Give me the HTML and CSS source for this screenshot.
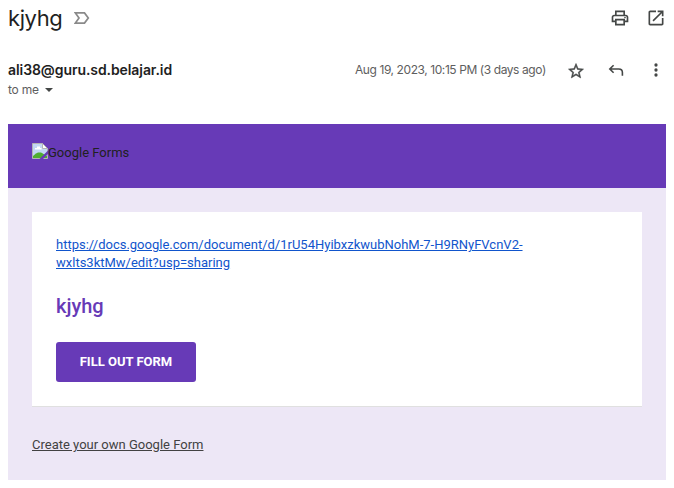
FILE: index.html
```html
<!DOCTYPE html>
<html lang="en">
<head>
<meta charset="utf-8">
<title>kjyhg</title>
<link rel="stylesheet" href="styles.css">
</head>
<body>
<header class="subject-bar">
  <h1 class="subject">kjyhg</h1>
  <svg class="tag" width="16" height="12" viewBox="0 0 16 12"><path d="M1.4.9h9.1L14.3 6l-3.8 5.1H1.4L5 6z"/></svg>
  <div class="subject-tools">
    <svg class="icon" viewBox="0 0 24 24"><path d="M19 8h-1V3H6v5H5c-1.66 0-3 1.34-3 3v6h4v4h12v-4h4v-6c0-1.66-1.34-3-3-3zM8 5h8v3H8V5zm8 12v2H8v-4h8v2zm2-2v-2H6v2H4v-4c0-.55.45-1 1-1h14c.55 0 1 .45 1 1v4h-2z"/><circle cx="18" cy="11.5" r="1"/></svg>
    <svg class="icon" viewBox="0 0 24 24"><path d="M19 19H5V5h7V3H5c-1.11 0-2 .9-2 2v14c0 1.1.89 2 2 2h14c1.1 0 2-.9 2-2v-7h-2v7zM14 3v2h3.59l-9.83 9.83 1.41 1.41L19 6.41V10h2V3h-7z"/></svg>
  </div>
</header>
<section class="sender-row">
  <div class="sender">
    <div class="address">ali38@guru.sd.belajar.id</div>
    <div class="recipient"><span class="to">to me</span><span class="caret"></span></div>
  </div>
  <div class="meta">
    <span class="date">Aug 19, 2023, 10:15 PM (3 days ago)</span>
    <svg class="icon star" viewBox="0 0 24 24"><path d="M21 9.74l-6.5-.6L12 3 9.5 9.14l-6.5.6 4.9 4.23L6.4 20.3 12 16.9l5.6 3.4-1.5-6.33L21 9.74zM12 15.4l-3.76 2.27 1-4.28-3.32-2.88 4.38-.38L12 6.1l1.71 4.04 4.38.38-3.32 2.88 1 4.28L12 15.4z" stroke="#444746" stroke-width=".7"/></svg>
    <svg class="icon" viewBox="0 0 20 20"><path class="stroke" d="M7.6 5.2 3.8 9l3.8 3.8M4 9h8.8q3.6 0 3.6 3.6v3.1"/></svg>
    <svg class="icon" viewBox="0 0 20 20"><circle cx="10" cy="5" r="1.65"/><circle cx="10" cy="10" r="1.65"/><circle cx="10" cy="15" r="1.65"/></svg>
  </div>
</section>
<main class="mail">
  <div class="banner">
    <svg class="broken" width="16" height="16" viewBox="0 0 16 16">
      <path fill="#c3d7f4" d="M.5.5h10l5 5v10H.5z"/>
      <path fill="#fff" d="M3 6.5V5h2V3.5h3V5h1.5v1.5z"/>
      <path fill="#4fae31" d="M1 15v-2l3-2.5 2-1h3l3 1.7 3 1.8v2z"/>
      <path fill="#fff" d="M10.5.5v5h5z"/>
      <path fill="none" stroke="#b4b4b4" d="M.5 15.5V.5h10l5 5v10H.5M10.5.5v5h5"/>
      <path fill="#673ab7" d="M16 7.5V11l-5 5H7.5z"/>
    </svg><span>Google Forms</span>
  </div>
  <div class="content">
    <div class="card">
      <a class="doc-link">https://docs.google.com/document/d/1rU54HyibxzkwubNohM-7-H9RNyFVcnV2-<br>wxlts3ktMw/edit?usp=sharing</a>
      <h2 class="form-title">kjyhg</h2>
      <a class="button">FILL OUT FORM</a>
    </div>
    <a class="create">Create your own Google Form</a>
  </div>
</main>
</body>
</html>
```
FILE: styles.css
```css
* { box-sizing: border-box; }
body { margin: 0; width: 674px; height: 488px; padding: 0 8px; background: #fff; font: 13px/18px Roboto, sans-serif; color: #222; overflow: hidden; }
svg { display: block; flex: none; }
.icon { width: 20px; height: 20px; fill: #444746; }
.star { margin-top: 1px; }
.stroke { fill: none; stroke: #444746; stroke-width: 1.6; }
.subject-bar { display: flex; align-items: center; height: 36px; }
.subject { width: 54px; margin: 0; font: 400 22px/36px Inter, sans-serif; letter-spacing: -.4px; color: #1f1f1f; white-space: nowrap; }
.tag { margin-left: 12px; fill: none; stroke: #8a8a8a; stroke-width: 1.7; }
.subject-tools { display: flex; gap: 16px; margin-left: auto; }
.sender-row { display: flex; justify-content: space-between; height: 88px; padding-top: 24px; }
.address { font: 600 14px/20px Inter, sans-serif; letter-spacing: -.08px; color: #1f1f1f; }
.recipient { display: flex; align-items: center; font: 12px/20px Inter, sans-serif; color: #5e5e5e; }
.to { width: 37px; letter-spacing: -.2px; }
.caret { border: 4px solid transparent; border-top: 4px solid #444746; border-bottom: 0; }
.meta { display: flex; align-items: flex-start; gap: 20px; }
.date { width: 191px; font: 12px/20px Inter, sans-serif; letter-spacing: -.42px; color: #5e5e5e; white-space: nowrap; }
.banner { display: flex; height: 64px; padding: 19px 24px; background: #673ab7; line-height: 20px; color: #212121; }
.content { height: 292px; padding: 24px; background: #ede7f6; }
.card { height: 195px; padding: 24px; background: #fff; border-bottom: 1px solid #e0e0e0; }
.doc-link { display: block; color: #15c; text-decoration: underline; }
.form-title { margin: 22px 0 24px; font: 500 20px/24px Roboto, sans-serif; color: #673ab7; }
.button { display: block; width: 140px; height: 40px; border-radius: 3px; background: #673ab7; color: #fff; font-weight: 700; line-height: 40px; text-align: center; }
.create { display: block; margin-top: 29px; color: #424242; text-decoration: underline; }
```
